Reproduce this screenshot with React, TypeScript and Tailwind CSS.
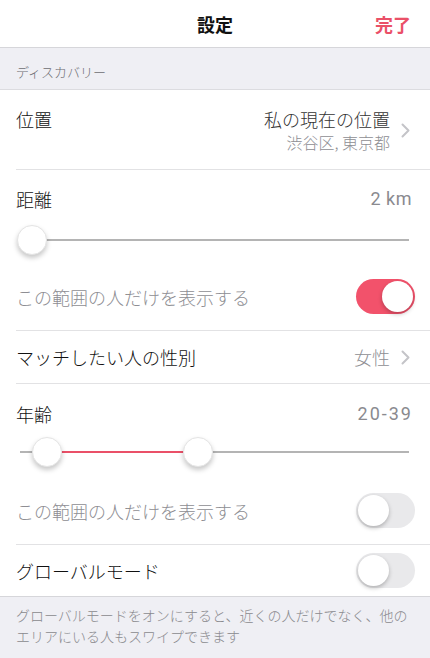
import { ReactNode } from 'react';

const PINK = 'bg-[#f2526b]';

function Chevron() {
  return (
    <svg width="9" height="15" viewBox="0 0 9 15" className="ml-[11px] mr-[4px] shrink-0">
      <path d="M1.5 1.5 L7.5 7.5 L1.5 13.5" fill="none" stroke="#c4c4c8" strokeWidth="2" strokeLinecap="round" strokeLinejoin="round" />
    </svg>
  );
}

function Toggle({ on }: { on: boolean }) {
  return (
    <div
      className={`relative w-[59px] h-[35px] rounded-full shrink-0 ${on ? PINK : 'bg-[#e9e9eb]'}`}
    >
      <div
        className={`absolute top-[2px] w-[31px] h-[31px] rounded-full bg-white shadow-[0_2px_4px_rgba(0,0,0,0.25)] ${on ? 'left-[26px]' : 'left-[2px]'}`}
      />
    </div>
  );
}

function Thumb({ left }: { left: number }) {
  return (
    <div
      className="absolute top-0 w-[30px] h-[30px] rounded-full bg-white border border-[#e4e4e4] shadow-[0_3px_5px_rgba(0,0,0,0.22)]"
      style={{ left }}
    />
  );
}

function Slider({ from, to, thumbs }: { from: number; to: number; thumbs: number[] }) {
  // positions are page x of thumb centres; track runs from x=20 to x=409
  return (
    <div className="relative h-[30px] mx-[20px] w-[389px]">
      <div className="absolute left-0 right-0 top-[14px] h-[2px] bg-[#b4b4b4]" />
      <div
        className="absolute top-[14px] h-[2px] bg-[#ea5068]"
        style={{ left: from - 20, width: to - from }}
      />
      {thumbs.map((c) => (
        <Thumb key={c} left={c - 20 - 15} />
      ))}
    </div>
  );
}

function Row({ children, className = '' }: { children: ReactNode; className?: string }) {
  return <div className={`flex items-center justify-between pl-4 pr-4 ${className}`}>{children}</div>;
}

export default function App() {
  return (
    <div className="w-[430px] h-[658px] overflow-hidden bg-white font-['Noto_Sans_CJK_JP','Noto_Sans',sans-serif] font-light text-[#111]">
      {/* nav bar */}
      <div className="grid grid-cols-3 items-center h-[48px] border-b border-[#d6d6da] px-4">
        <div />
        <div className="text-center text-[18px] font-bold leading-[24px]">設定</div>
        <div className="text-right text-[18px] font-bold leading-[24px] text-[#ea5068] pr-[3px]">完了</div>
      </div>

      {/* section header */}
      <div className="h-[42px] bg-[#efeff4] border-b border-[#dcdce0] px-4 flex items-end pb-[8px]">
        <span className="text-[13px] leading-[18px] text-[#6d6d72]">ディスカバリー</span>
      </div>

      {/* location */}
      <div className="h-[80px] border-b border-[#e2e2e4] ml-4 pr-4 flex items-start justify-between pt-[17px]">
        <span className="text-[18px] leading-[24px]">位置</span>
        <div className="flex items-center">
          <div className="flex flex-col items-end">
            <span className="text-[18px] leading-[24px] text-[#333]">私の現在の位置</span>
            <span className="text-[16px] leading-[22px] text-[#8e8e93]">渋谷区, 東京都</span>
          </div>
          <Chevron />
        </div>
      </div>

      {/* distance */}
      <div className="flex flex-col border-b border-[#e2e2e4] ml-4">
        <div className="flex items-center justify-between pr-4 mt-[17px] h-[24px]">
          <span className="text-[18px] leading-[24px]">距離</span>
          <span className="font-['Roboto',sans-serif] font-normal text-[18px] leading-[24px] tracking-[0.5px] text-[#8a8a8f] pr-[2px]">2 km</span>
        </div>
        <div className="mt-[14px] -ml-4">
          <Slider from={32} to={32} thumbs={[32]} />
        </div>
        <div className="flex items-center justify-between pr-[15px] mt-[24px] mb-[16px]">
          <span className="text-[18px] leading-[24px] text-[#8e8e93]">この範囲の人だけを表示する</span>
          <Toggle on />
        </div>
      </div>

      {/* gender */}
      <div className="h-[53px] border-b border-[#e2e2e4] ml-4 pr-4 flex items-center justify-between">
        <span className="text-[18px] leading-[24px]">マッチしたい人の性別</span>
        <div className="flex items-center">
          <span className="text-[18px] leading-[24px] text-[#8e8e93]">女性</span>
          <Chevron />
        </div>
      </div>

      {/* age */}
      <div className="flex flex-col border-b border-[#e2e2e4] ml-4">
        <div className="flex items-center justify-between pr-4 mt-[18px] h-[24px]">
          <span className="text-[18px] leading-[24px]">年齢</span>
          <span className="font-['Roboto',sans-serif] font-normal text-[18px] leading-[24px] tracking-[2px] text-[#8a8a8f] pr-[1px]">20-39</span>
        </div>
        <div className="mt-[11px] -ml-4">
          <Slider from={47} to={198} thumbs={[47, 198]} />
        </div>
        <div className="flex items-center justify-between pr-[15px] mt-[26px] mb-[16px]">
          <span className="text-[18px] leading-[24px] text-[#8e8e93]">この範囲の人だけを表示する</span>
          <Toggle on={false} />
        </div>
      </div>

      {/* global mode */}
      <Row className="h-[52px] border-b border-[#d6d6da] pr-[15px]">
        <span className="text-[18px] leading-[24px]">グローバルモード</span>
        <Toggle on={false} />
      </Row>

      {/* footer */}
      <div className="bg-[#efeff4] h-full px-4 pt-[8px]">
        <p className="text-[14px] leading-[21px] text-[#8a8a8e]">
          グローバルモードをオンにすると、近くの人だけでなく、他のエリアにいる人もスワイプできます
        </p>
      </div>
    </div>
  );
}
